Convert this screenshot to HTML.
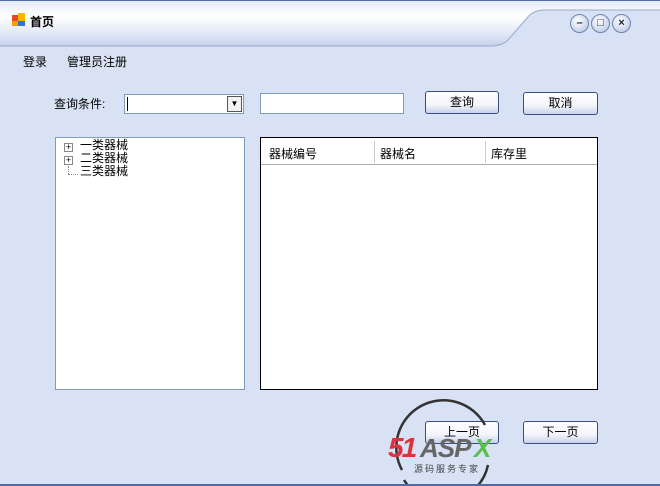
<!DOCTYPE html>
<html><head><meta charset="utf-8"><style>
*{margin:0;padding:0;box-sizing:border-box}
body{width:660px;height:486px;overflow:hidden;background:#d8e2f4;font-family:"Liberation Sans","Noto Sans CJK SC","WenQuanYi Zen Hei",sans-serif;font-size:12px;color:#000;position:relative}
.abs{position:absolute}
.btn{position:absolute;height:23px;border:1px solid #3b4e84;border-radius:3px;background:linear-gradient(#fff 0%,#f3f5fb 60%,#c9d2ea 100%);text-align:center;line-height:20px;font-size:12px}
.cb{position:absolute;width:19px;height:19px;border-radius:50%;border:1px solid #6f82b2;background:radial-gradient(circle at 40% 35%,#fff,#c7d2ea 70%,#9eb0d8);top:14px;font-size:11px;font-weight:bold;text-align:center;line-height:17px;color:#223}
</style></head><body>
<svg class="abs" style="left:0;top:0" width="660" height="50">
<defs><linearGradient id="g" x1="0" y1="0" x2="0" y2="1"><stop offset="0" stop-color="#e3e9f6"/><stop offset=".35" stop-color="#ffffff"/><stop offset=".75" stop-color="#dfe6f5"/><stop offset="1" stop-color="#c6d2ec"/></linearGradient></defs>
<rect width="660" height="50" fill="#d8e2f4"/>
<path d="M0,0 H660 V10 H545 Q533,10 527,18 L508,40 Q502,46 490,46 H0 Z" fill="url(#g)"/>
<path d="M0,46 H490 Q502,46 508,40 L527,18 Q533,10 545,10 H660" fill="none" stroke="#9aaad0" stroke-width="1"/>
<path d="M0,0.5 H660" stroke="#506aa8"/>
</svg>
<div class="abs" style="left:12px;top:15px;width:6px;height:6px;background:#e8482a"></div>
<div class="abs" style="left:18px;top:13px;width:7px;height:8px;background:#f8b400"></div>
<div class="abs" style="left:12px;top:21px;width:6px;height:5px;background:#f0a000"></div>
<div class="abs" style="left:18px;top:21px;width:7px;height:5px;background:#3a70d0"></div>
<div class="abs" style="left:30px;top:13px;font-weight:bold">首页</div>
<div class="cb" style="left:570px">–</div>
<div class="cb" style="left:591px">□</div>
<div class="cb" style="left:612px">×</div>
<div class="abs" style="left:23px;top:53px">登录</div>
<div class="abs" style="left:67px;top:53px">管理员注册</div>
<div class="abs" style="left:54px;top:95px">查询条件:</div>
<div class="abs" style="left:124px;top:94px;width:120px;height:20px;background:#fff;border:1px solid #7f9db9"><div class="abs" style="left:2px;top:2px;width:1px;height:14px;background:#000"></div><div class="abs" style="right:1px;top:1px;width:15px;height:16px;border:1px solid #555;background:#f3f3f3;font-size:8px;text-align:center;line-height:14px">▼</div></div>
<div class="abs" style="left:260px;top:93px;width:144px;height:21px;background:#fff;border:1px solid #7f9db9"></div>
<div class="btn" style="left:425px;top:91px;width:74px">查询</div>
<div class="btn" style="left:523px;top:92px;width:75px">取消</div>
<div class="abs" style="left:55px;top:137px;width:190px;height:253px;background:#fff;border:1px solid #7f9db9">
<div class="abs" style="left:8px;top:5px;width:9px;height:9px;border:1px solid #888;font-size:9px;line-height:7px;text-align:center">+</div>
<div class="abs" style="left:8px;top:18px;width:9px;height:9px;border:1px solid #888;font-size:9px;line-height:7px;text-align:center">+</div>
<div class="abs" style="left:12px;top:28px;height:8px;border-left:1px dotted #888"></div>
<div class="abs" style="left:12px;top:36px;width:10px;border-top:1px dotted #888"></div>
<div class="abs" style="left:24px;top:1px;line-height:13px">一类器械<br>二类器械<br>三类器械</div>
</div>
<div class="abs" style="left:260px;top:137px;width:338px;height:253px;background:#fff;border:1px solid #000">
<div class="abs" style="left:0;top:0;width:336px;height:27px;border-bottom:1px solid #aaa;background:#fff"></div>
<div class="abs" style="left:113px;top:3px;height:22px;border-left:1px solid #ccc"></div>
<div class="abs" style="left:224px;top:3px;height:22px;border-left:1px solid #ccc"></div>
<div class="abs" style="left:8px;top:7px">器械编号</div>
<div class="abs" style="left:119px;top:7px">器械名</div>
<div class="abs" style="left:230px;top:7px">库存里</div>
</div>
<div class="btn" style="left:425px;top:421px;width:74px">上一页</div>
<div class="btn" style="left:523px;top:421px;width:75px">下一页</div>
<svg class="abs" style="left:380px;top:395px" width="140" height="91">
<path d="M22,75 A46,46 0 0 1 105,30" fill="none" stroke="#333" stroke-width="2.5"/>
<path d="M24,85 A46,46 0 0 0 108,70" fill="none" stroke="#333" stroke-width="2.5"/>
<text x="8" y="62" font-family="Liberation Sans" font-weight="bold" font-style="italic" font-size="28" fill="#e0303c" letter-spacing="-2">51</text>
<text x="40" y="62" font-family="Liberation Sans" font-weight="bold" font-style="italic" font-size="26" fill="#666" letter-spacing="-1">ASP</text>
<text x="94" y="62" font-family="Liberation Sans" font-weight="bold" font-style="italic" font-size="26" fill="#5bbf4f">X</text>
<text x="34" y="77" font-family="Noto Sans CJK SC,sans-serif" font-size="9" fill="#444" letter-spacing="2">源码服务专家</text>
</svg>
<div class="abs" style="left:0;top:484px;width:660px;height:2px;background:#506aa8"></div>
</body></html>
